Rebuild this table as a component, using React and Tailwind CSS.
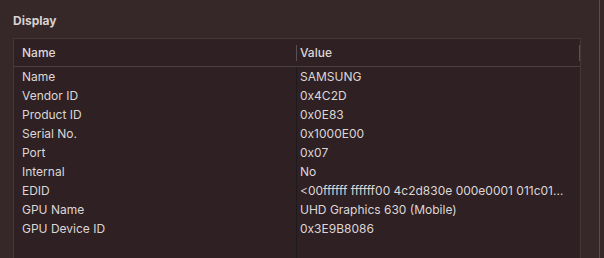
const rows = [
  ["Name", "SAMSUNG"],
  ["Vendor ID", "0x4C2D"],
  ["Product ID", "0x0E83"],
  ["Serial No.", "0x1000E00"],
  ["Port", "0x07"],
  ["Internal", "No"],
  ["EDID", "<00ffffff ffffff00 4c2d830e 000e0001 011c01…"],
  ["GPU Name", "UHD Graphics 630 (Mobile)"],
  ["GPU Device ID", "0x3E9B8086"],
];

export default function App() {
  return (
    <div
      className="flex h-[258px] w-[604px] overflow-hidden bg-[#362729] text-[12px] text-[#ddd6d6]"
      style={{ fontFamily: "Inter, 'Liberation Sans', sans-serif" }}
    >
      <div className="flex w-[599px] flex-col pl-[13px] pr-[18px] pt-[13px]">
        <h2 className="font-bold leading-4 text-[#d9d2d2]">Display</h2>

        <div className="mt-[9px] h-[260px] shrink-0 border border-b-0 border-[#423839] bg-[#2e2023]">
          {/* header */}
          <div className="flex h-[28px] items-center border-b border-[#4a3f41] font-medium">
            <div className="flex w-[283px] items-center self-stretch pl-[8px]">
              <span className="flex-1">Name</span>
              <span className="h-[16px] w-px bg-[#5a4f51]" />
            </div>
            <div className="flex flex-1 items-center self-stretch pl-[3px]">
              <span className="flex-1">Value</span>
              <span className="h-[16px] w-px bg-[#5a4f51]" />
            </div>
          </div>

          {/* body */}
          <div className="flex h-full">
            <div className="w-[283px] border-r border-[#1f1a1b] pl-[8px]">
              {rows.map(([k]) => (
                <div key={k} className="h-[19px] leading-[19px]">
                  {k}
                </div>
              ))}
            </div>
            <div className="min-w-0 flex-1 pl-[3px]">
              {rows.map(([k, v]) => (
                <div key={k} className="h-[19px] truncate leading-[19px]">
                  {v}
                </div>
              ))}
            </div>
          </div>
        </div>
      </div>
      <div className="w-px bg-[#5c4e50]" />
      <div className="flex-1" />
    </div>
  );
}
